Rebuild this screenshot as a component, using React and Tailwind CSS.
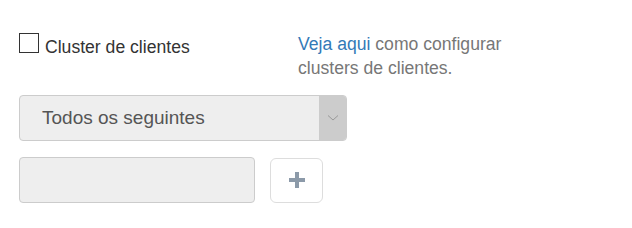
export default function App() {
  return (
    <div className="w-[632px] h-[228px] bg-white font-['Liberation_Sans',Arial,sans-serif]">
      <div className="flex pt-[32px] pl-[19px]">
        <label className="flex items-start w-[279px]">
          <span className="mt-[1px] w-[20px] h-[20px] border border-[#333] bg-white shrink-0"></span>
          <span className="ml-[6px] text-[17.6px] leading-[24px] text-[#333] mt-[3px]">Cluster de clientes</span>
        </label>
        <div className="text-[17.6px] leading-[24px] text-[#777] w-[230px]">
          <span className="text-[#337ab7]">Veja aqui</span> como configurar clusters de clientes.
        </div>
      </div>
      <div className="mt-[15px] ml-[19px] w-[328px] h-[46px] flex border border-[#ccc] rounded-[4px] bg-[#eee] overflow-hidden">
        <div className="flex-1 flex items-center pl-[22px] text-[19px] text-[#555]">Todos os seguintes</div>
        <div className="w-[27px] bg-[#ccc] flex items-center justify-center">
          <svg width="12" height="8" viewBox="0 0 12 8"><path d="M1 1.5 L6 6 L11 1.5" fill="none" stroke="#999" strokeWidth="1"/></svg>
        </div>
      </div>
      <div className="mt-[16px] ml-[19px] flex items-center gap-[15px]">
        <div className="w-[236px] h-[46px] border border-[#ccc] rounded-[4px] bg-[#eee]"></div>
        <button className="w-[53px] h-[45px] border border-[#ddd] rounded-[6px] bg-white flex items-center justify-center">
          <svg width="18" height="18" viewBox="0 0 18 18"><path d="M7 1h4v6h6v4h-6v6H7v-6H1V7h6z" fill="#8c9aa9"/></svg>
        </button>
      </div>
    </div>
  );
}
